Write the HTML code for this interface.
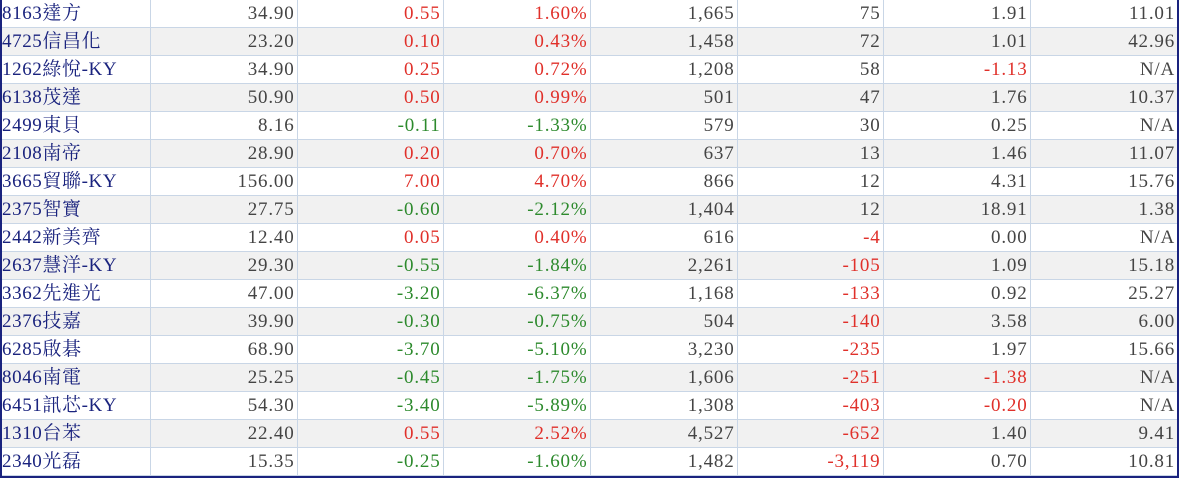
<!DOCTYPE html>
<html><head><meta charset="utf-8"><style>
body{margin:0;background:#fff;width:1179px;height:480px;overflow:hidden}
.w{position:absolute;left:0;top:0;width:1175px;height:476px;border-left:2px solid #1a237e;border-right:2px solid #1a237e;border-bottom:2px solid #1a237e}
table{border-collapse:collapse;table-layout:fixed;width:1175px;font-family:"Liberation Serif","Noto Serif CJK TC",serif;font-size:19px;color:#444;letter-spacing:0.8px}
td{height:27px;border:1px solid #c9d6e6;border-top:none;padding:0 2px 0 0;text-align:right;white-space:nowrap;overflow:hidden;line-height:27px}
td:first-child{text-align:left;color:#1a237e;padding:0;border-left:none;letter-spacing:0.6px}
td:last-child{border-right:none}
tr:nth-child(even) td{background:#f1f1f1}
.r{color:#e0302a}.g{color:#2d8a2d}
</style></head><body><div class="w"><table>
<colgroup><col style="width:148px"><col style="width:147px"><col style="width:146px"><col style="width:147px"><col style="width:147px"><col style="width:146px"><col style="width:147px"><col style="width:147px"></colgroup>
<tr><td>8163達方</td><td>34.90</td><td class="r">0.55</td><td class="r">1.60%</td><td>1,665</td><td>75</td><td>1.91</td><td>11.01</td></tr>
<tr><td>4725信昌化</td><td>23.20</td><td class="r">0.10</td><td class="r">0.43%</td><td>1,458</td><td>72</td><td>1.01</td><td>42.96</td></tr>
<tr><td>1262綠悅-KY</td><td>34.90</td><td class="r">0.25</td><td class="r">0.72%</td><td>1,208</td><td>58</td><td class="r">-1.13</td><td>N/A</td></tr>
<tr><td>6138茂達</td><td>50.90</td><td class="r">0.50</td><td class="r">0.99%</td><td>501</td><td>47</td><td>1.76</td><td>10.37</td></tr>
<tr><td>2499東貝</td><td>8.16</td><td class="g">-0.11</td><td class="g">-1.33%</td><td>579</td><td>30</td><td>0.25</td><td>N/A</td></tr>
<tr><td>2108南帝</td><td>28.90</td><td class="r">0.20</td><td class="r">0.70%</td><td>637</td><td>13</td><td>1.46</td><td>11.07</td></tr>
<tr><td>3665貿聯-KY</td><td>156.00</td><td class="r">7.00</td><td class="r">4.70%</td><td>866</td><td>12</td><td>4.31</td><td>15.76</td></tr>
<tr><td>2375智寶</td><td>27.75</td><td class="g">-0.60</td><td class="g">-2.12%</td><td>1,404</td><td>12</td><td>18.91</td><td>1.38</td></tr>
<tr><td>2442新美齊</td><td>12.40</td><td class="r">0.05</td><td class="r">0.40%</td><td>616</td><td class="r">-4</td><td>0.00</td><td>N/A</td></tr>
<tr><td>2637慧洋-KY</td><td>29.30</td><td class="g">-0.55</td><td class="g">-1.84%</td><td>2,261</td><td class="r">-105</td><td>1.09</td><td>15.18</td></tr>
<tr><td>3362先進光</td><td>47.00</td><td class="g">-3.20</td><td class="g">-6.37%</td><td>1,168</td><td class="r">-133</td><td>0.92</td><td>25.27</td></tr>
<tr><td>2376技嘉</td><td>39.90</td><td class="g">-0.30</td><td class="g">-0.75%</td><td>504</td><td class="r">-140</td><td>3.58</td><td>6.00</td></tr>
<tr><td>6285啟碁</td><td>68.90</td><td class="g">-3.70</td><td class="g">-5.10%</td><td>3,230</td><td class="r">-235</td><td>1.97</td><td>15.66</td></tr>
<tr><td>8046南電</td><td>25.25</td><td class="g">-0.45</td><td class="g">-1.75%</td><td>1,606</td><td class="r">-251</td><td class="r">-1.38</td><td>N/A</td></tr>
<tr><td>6451訊芯-KY</td><td>54.30</td><td class="g">-3.40</td><td class="g">-5.89%</td><td>1,308</td><td class="r">-403</td><td class="r">-0.20</td><td>N/A</td></tr>
<tr><td>1310台苯</td><td>22.40</td><td class="r">0.55</td><td class="r">2.52%</td><td>4,527</td><td class="r">-652</td><td>1.40</td><td>9.41</td></tr>
<tr><td>2340光磊</td><td>15.35</td><td class="g">-0.25</td><td class="g">-1.60%</td><td>1,482</td><td class="r">-3,119</td><td>0.70</td><td>10.81</td></tr>
</table></div></body></html>
